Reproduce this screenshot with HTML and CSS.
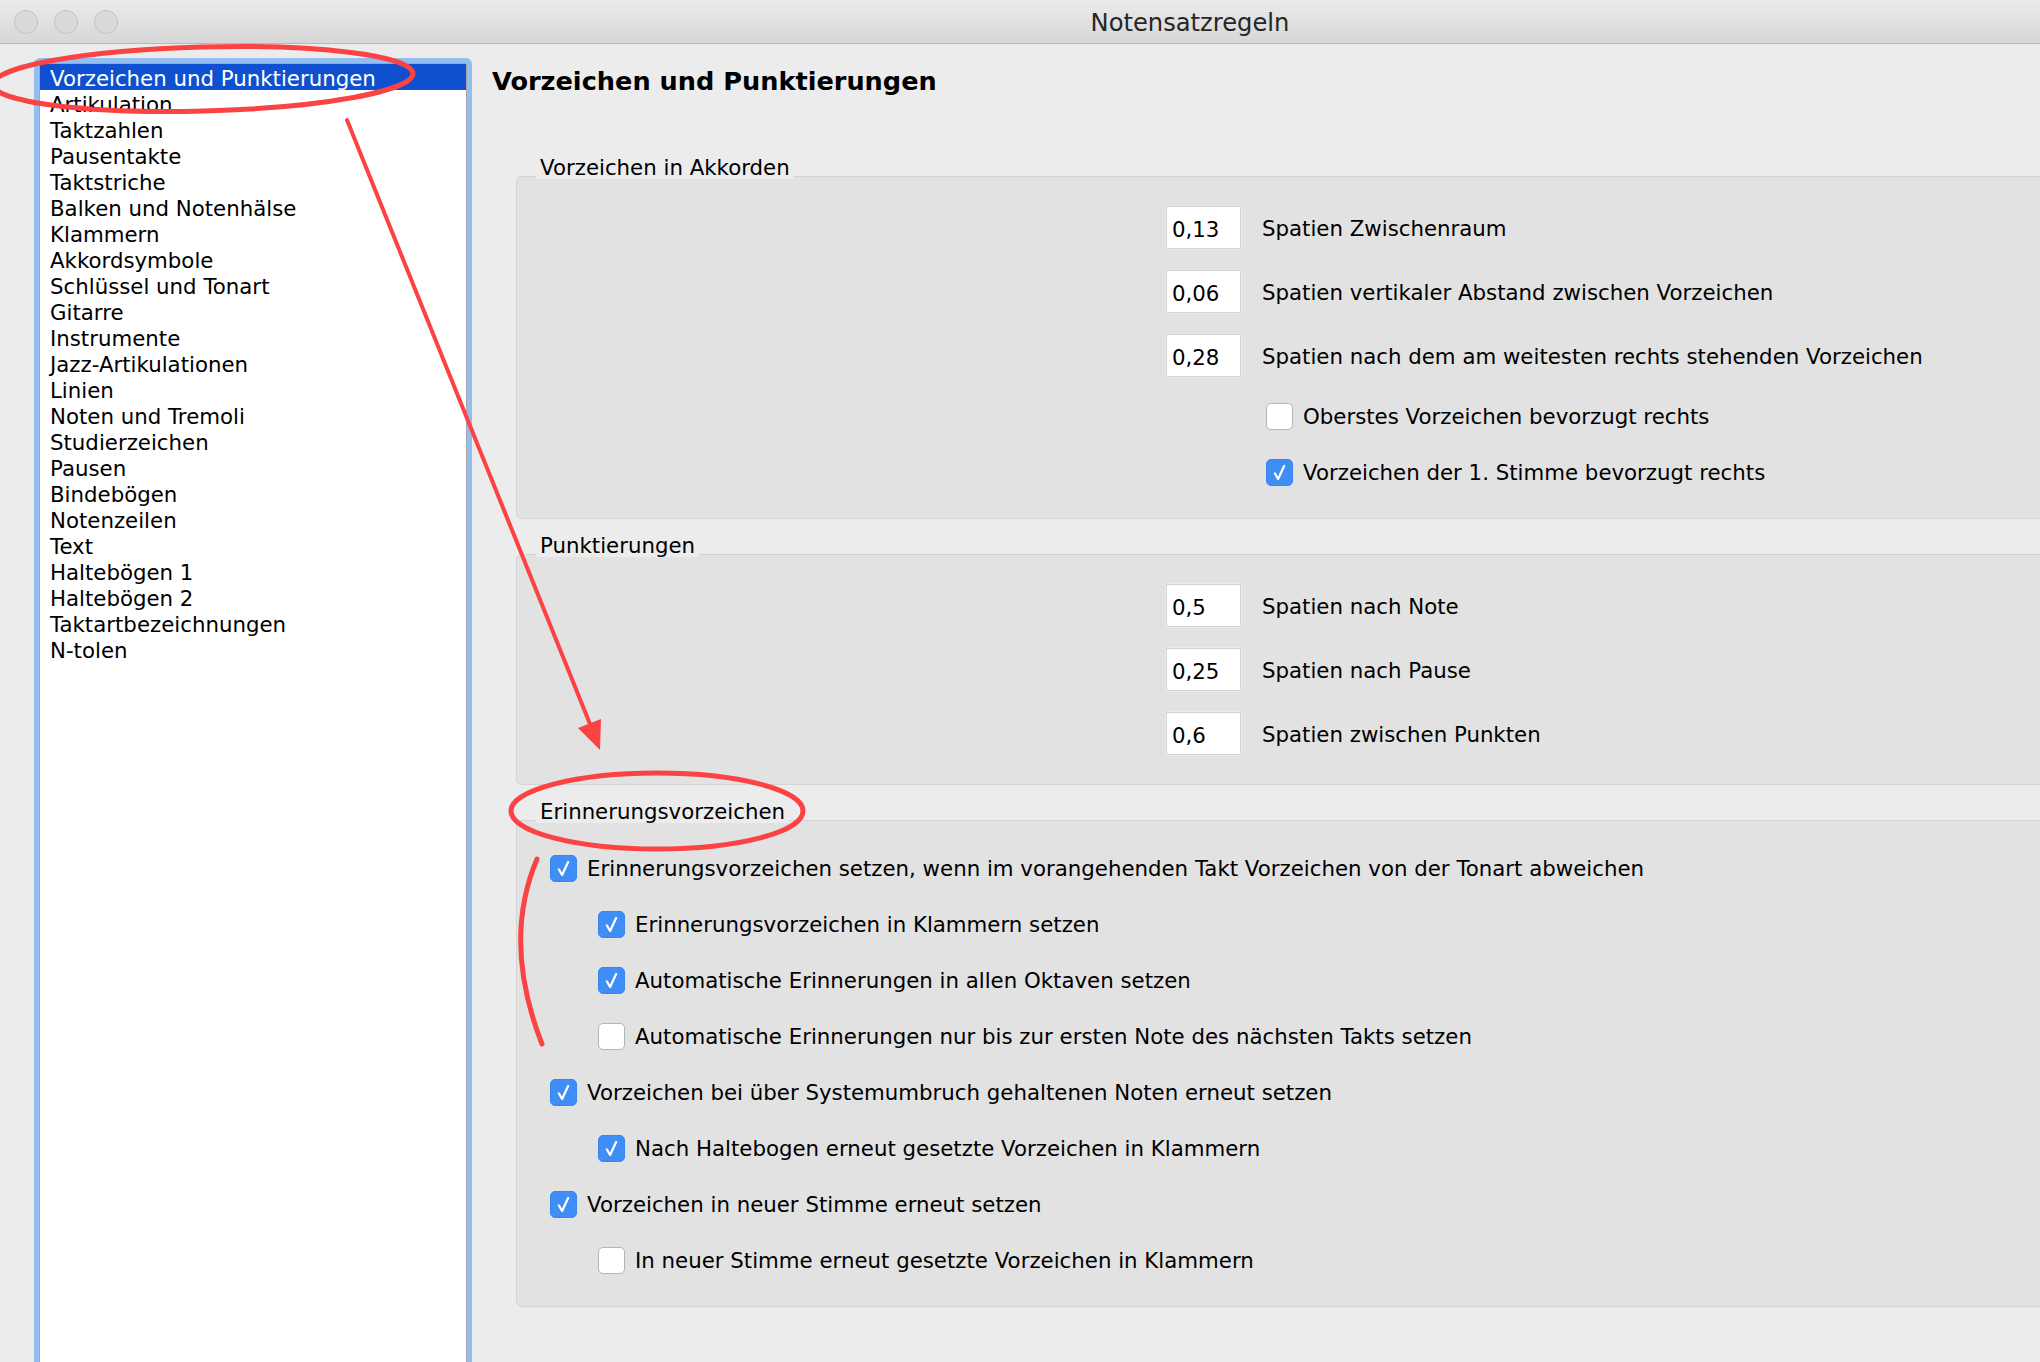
FILE: index.html
```html
<!DOCTYPE html>
<html lang="de">
<head>
    <meta charset="UTF-8">
    <title>Notensatzregeln</title>
    <link rel="stylesheet" href="styles.css">
</head>
<body>

<div class="window">
    <!-- title bar -->
    <div class="titlebar">
        <div class="lights">
            <span class="light"></span>
            <span class="light"></span>
            <span class="light"></span>
        </div>
        <div class="title">Notensatzregeln</div>
        <div></div>
    </div>

    <div class="main">
        <div class="sidebar">
            <ul class="rule-list">
                <li class="selected">Vorzeichen und Punktierungen</li>
                <li>Artikulation</li>
                <li>Taktzahlen</li>
                <li>Pausentakte</li>
                <li>Taktstriche</li>
                <li>Balken und Notenhälse</li>
                <li>Klammern</li>
                <li>Akkordsymbole</li>
                <li>Schlüssel und Tonart</li>
                <li>Gitarre</li>
                <li>Instrumente</li>
                <li>Jazz-Artikulationen</li>
                <li>Linien</li>
                <li>Noten und Tremoli</li>
                <li>Studierzeichen</li>
                <li>Pausen</li>
                <li>Bindebögen</li>
                <li>Notenzeilen</li>
                <li>Text</li>
                <li>Haltebögen 1</li>
                <li>Haltebögen 2</li>
                <li>Taktartbezeichnungen</li>
                <li>N-tolen</li>
            </ul>
        </div>

        <div class="pane">
            <h1>Vorzeichen und Punktierungen</h1>

            <section class="group">
                <div class="group-title"><span>Vorzeichen in Akkorden</span></div>
                <div class="group-box fields">
                    <div class="row field-row"><input class="num" type="text" value="0,13" readonly><label>Spatien Zwischenraum</label></div>
                    <div class="row field-row"><input class="num" type="text" value="0,06" readonly><label>Spatien vertikaler Abstand zwischen Vorzeichen</label></div>
                    <div class="row field-row"><input class="num" type="text" value="0,28" readonly><label>Spatien nach dem am weitesten rechts stehenden Vorzeichen</label></div>
                    <div class="row check-row sub-fields"><span class="check"></span><label>Oberstes Vorzeichen bevorzugt rechts</label></div>
                    <div class="row check-row sub-fields"><span class="check on"><svg viewBox="0 0 27 27"><path d="M8.5 14.5 L12 20.5 L18.5 6.5"/></svg></span><label>Vorzeichen der 1. Stimme bevorzugt rechts</label></div>
                </div>
            </section>

            <section class="group">
                <div class="group-title"><span>Punktierungen</span></div>
                <div class="group-box fields">
                    <div class="row field-row"><input class="num" type="text" value="0,5" readonly><label>Spatien nach Note</label></div>
                    <div class="row field-row"><input class="num" type="text" value="0,25" readonly><label>Spatien nach Pause</label></div>
                    <div class="row field-row"><input class="num" type="text" value="0,6" readonly><label>Spatien zwischen Punkten</label></div>
                </div>
            </section>

            <section class="group">
                <div class="group-title"><span>Erinnerungsvorzeichen</span></div>
                <div class="group-box checks">
                    <div class="row check-row"><span class="check on"><svg viewBox="0 0 27 27"><path d="M8.5 14.5 L12 20.5 L18.5 6.5"/></svg></span><label>Erinnerungsvorzeichen setzen, wenn im vorangehenden Takt Vorzeichen von der Tonart abweichen</label></div>
                    <div class="row check-row sub"><span class="check on"><svg viewBox="0 0 27 27"><path d="M8.5 14.5 L12 20.5 L18.5 6.5"/></svg></span><label>Erinnerungsvorzeichen in Klammern setzen</label></div>
                    <div class="row check-row sub"><span class="check on"><svg viewBox="0 0 27 27"><path d="M8.5 14.5 L12 20.5 L18.5 6.5"/></svg></span><label>Automatische Erinnerungen in allen Oktaven setzen</label></div>
                    <div class="row check-row sub"><span class="check"></span><label>Automatische Erinnerungen nur bis zur ersten Note des nächsten Takts setzen</label></div>
                    <div class="row check-row"><span class="check on"><svg viewBox="0 0 27 27"><path d="M8.5 14.5 L12 20.5 L18.5 6.5"/></svg></span><label>Vorzeichen bei über Systemumbruch gehaltenen Noten erneut setzen</label></div>
                    <div class="row check-row sub"><span class="check on"><svg viewBox="0 0 27 27"><path d="M8.5 14.5 L12 20.5 L18.5 6.5"/></svg></span><label>Nach Haltebogen erneut gesetzte Vorzeichen in Klammern</label></div>
                    <div class="row check-row"><span class="check on"><svg viewBox="0 0 27 27"><path d="M8.5 14.5 L12 20.5 L18.5 6.5"/></svg></span><label>Vorzeichen in neuer Stimme erneut setzen</label></div>
                    <div class="row check-row sub"><span class="check"></span><label>In neuer Stimme erneut gesetzte Vorzeichen in Klammern</label></div>
                </div>
            </section>
        </div>
    </div>

    <!-- red hand-drawn marks lying over the dialog -->
    <svg class="marks" viewBox="0 0 2040 1362">
        <ellipse cx="203" cy="79" rx="210" ry="32" transform="rotate(-1.5 203 79)"/>
        <line x1="347" y1="120" x2="590" y2="724"/>
        <polygon class="head" points="600,750 578,728 601,719"/>
        <ellipse cx="657" cy="811" rx="146" ry="38"/>
        <path d="M537 859 Q502 942 542 1044"/>
    </svg>
</div>

</body>
</html>
```

FILE: styles.css
```css
/* Notensatzregeln dialog */
html, body {
    margin: 0;
    padding: 0;
    overflow: hidden;
    background-color: #ececec;
}
.window {
    position: relative;
    width: 2380px;
    height: 1362px;
    font-family: "DejaVu Sans", "Liberation Sans", sans-serif;
    font-size: 21.3px;
    color: #000;
}

/* title bar */
.titlebar {
    display: grid;
    grid-template-columns: 1fr auto 1fr;
    align-items: center;
    height: 43px;
    border-bottom: 1px solid #b9b9b9;
    background: linear-gradient(#ebebeb, #d6d6d6);
}
.lights {
    display: flex;
    gap: 16px;
    padding-left: 14px;
}
.light {
    width: 22px;
    height: 22px;
    border-radius: 50%;
    border: 1px solid #c2c2c2;
    background-color: #dadada;
}
.title {
    padding-top: 3px;
    font-size: 24.2px;
    color: #262626;
}

.main {
    display: flex;
    align-items: flex-start;
}

/* rule list on the left */
.sidebar {
    box-sizing: border-box;
    width: 428px;
    height: 1320px;
    margin: 19px 0 0 39px;
    border: 1px solid #a7a7a7;
    border-radius: 2px;
    box-shadow: 0 0 0 5px #93bff0;
    background-color: #fff;
}
.rule-list {
    list-style: none;
    margin: 0;
    padding: 0;
}
.rule-list li {
    height: 26px;
    line-height: 29px;
    padding-left: 10px;
    white-space: nowrap;
}
.rule-list li.selected {
    background-color: #0e50cf;
    color: #fff;
}

/* right pane */
.pane {
    flex: 1;
    margin-left: 5px;
    padding: 17px 0 0 20px;
}
.pane h1 {
    margin: 0 0 54px;
    padding-top: 2px;
    font-size: 25.6px;
    line-height: 36px;
    font-weight: bold;
}
.group {
    margin: 0 0 12px 24px;
}
.group-title {
    position: relative;
    z-index: 1;
    height: 26px;
}
.group-title span {
    display: inline-block;
    height: 26px;
    margin-left: 20px;
    padding: 0 4px;
    line-height: 30px;
    background-color: #ececec;
}
.group-box {
    margin-top: -3px;
    padding: 18px 0 19px;
    border: 1px solid #d4d4d4;
    border-radius: 6px;
    background-color: #e2e2e2;
}
.group-box.fields {
    padding-left: 649px;
}
.group-box.checks {
    padding-left: 33px;
}

.row {
    display: flex;
    align-items: center;
    white-space: nowrap;
}
.row label {
    padding-top: 3px;
}
.field-row {
    height: 64px;
    gap: 21px;
}
.check-row {
    height: 56px;
    gap: 10px;
}
.sub-fields {
    margin-left: 100px;
}
.check-row.sub {
    margin-left: 48px;
}

input.num {
    box-sizing: border-box;
    width: 75px;
    height: 43px;
    margin: 0;
    padding: 5px 0 0 5px;
    border: 1px solid #d2d2d2;
    box-shadow: 0 0 0 1px #ebebeb;
    background-color: #fff;
    font-family: "DejaVu Sans", "Liberation Sans", sans-serif;
    font-size: 21.3px;
    color: #000;
    outline: none;
}

.check {
    box-sizing: border-box;
    flex: none;
    width: 27px;
    height: 27px;
    margin-top: 2px;
    border: 1px solid #b5b5b5;
    border-radius: 5px;
    background-color: #fff;
}
.check.on {
    border-color: #3a86ee;
    background-color: #3f8ef6;
}
.check svg {
    display: block;
    width: 25px;
    height: 25px;
}
.check svg path {
    fill: none;
    stroke: #fff;
    stroke-width: 2.4;
    stroke-linecap: round;
    stroke-linejoin: round;
}

/* annotation overlay */
.marks {
    position: absolute;
    top: 0;
    left: 0;
    width: 2040px;
    height: 1362px;
    pointer-events: none;
}
.marks ellipse,
.marks line,
.marks path {
    fill: none;
    stroke: #fb4343;
    stroke-width: 5;
    stroke-linecap: round;
}
.marks line {
    stroke-width: 4;
}
.marks .head {
    fill: #fb4343;
}
```
